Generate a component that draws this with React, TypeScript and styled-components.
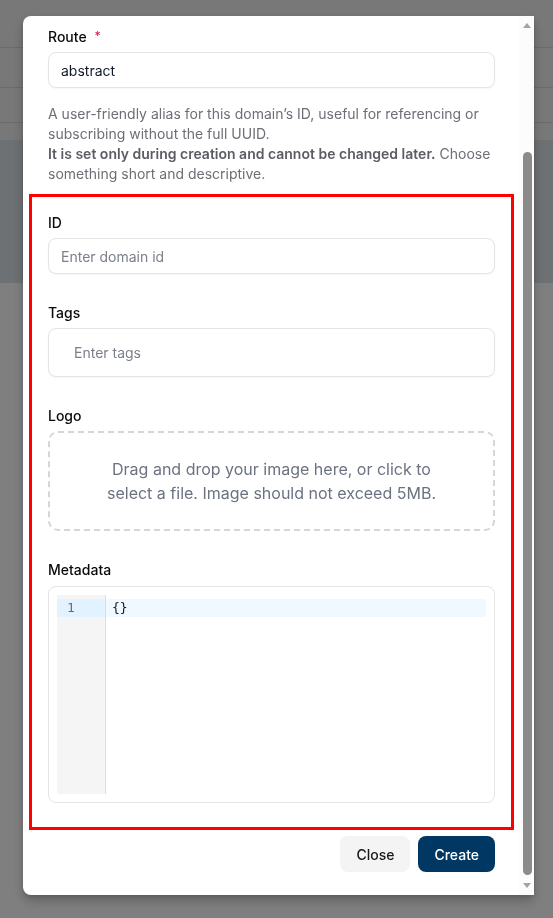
import React from "react";
import styled, { createGlobalStyle } from "styled-components";

const GlobalStyle = createGlobalStyle`
  html, body { margin: 0; padding: 0; height: 100%; }
  body { font-family: Inter, "Noto Sans", sans-serif; background: #ffffff; overflow: hidden; }
  * { box-sizing: border-box; }
`;

/* ---------- page behind the overlay ---------- */
const Page = styled.div`
  display: flex;
  flex-direction: column;
  height: 918px;
  background: #ffffff;
`;

const PageBar = styled.div<{ $h: number; $bg?: string; $line?: boolean }>`
  height: ${(p) => p.$h}px;
  flex: none;
  background: ${(p) => p.$bg || "#f0f0f0"};
  border-bottom: ${(p) => (p.$line ? "1px solid #d6d6d6" : "none")};
`;

/* ---------- overlay + dialog ---------- */
const Overlay = styled.div`
  position: fixed;
  inset: 0;
  background: rgba(0, 0, 0, 0.5);
  display: flex;
  padding: 16px 19px 23px 23px;
`;

const Dialog = styled.div`
  flex: 1;
  display: flex;
  background: #ffffff;
  border-radius: 8px 2px 2px 8px;
  box-shadow: 0 6px 12px rgba(0, 0, 0, 0.22), 0 2px 4px rgba(0, 0, 0, 0.12);
`;

const Body = styled.div`
  flex: 1;
  min-width: 0;
  overflow: hidden;
  padding: 11px 24px 23px 25px;
  display: flex;
  flex-direction: column;
`;

/* ---------- scrollbar drawing ---------- */
const ScrollBar = styled.div`
  width: 15px;
  flex: none;
  display: flex;
  flex-direction: column;
  align-items: center;
  background: #fcfcfc;
`;

const ArrowBox = styled.div<{ $down?: boolean }>`
  height: 15px;
  flex: none;
  display: flex;
  justify-content: center;
  align-items: ${(p) => (p.$down ? "flex-start" : "flex-end")};
  padding: ${(p) => (p.$down ? "3px 0 0" : "0 0 3px")};
`;

const Arrow = styled.span<{ $down?: boolean }>`
  width: 0;
  height: 0;
  border-left: 4px solid transparent;
  border-right: 4px solid transparent;
  ${(p) =>
    p.$down ? "border-top: 5px solid #a3a3a3;" : "border-bottom: 5px solid #a3a3a3;"}
`;

const Track = styled.div`
  flex: 1;
  width: 100%;
  display: flex;
  justify-content: center;
  padding: 121px 0 5px 1px;
`;

const Thumb = styled.div`
  width: 9px;
  border-radius: 5px;
  background: #8b8b8b;
`;

/* ---------- form ---------- */
const Field = styled.div`
  display: flex;
  flex-direction: column;
`;

const Label = styled.label<{ $gap?: number }>`
  display: block;
  font-size: 14px;
  line-height: 20px;
  font-weight: 500;
  color: #0a0a0a;
  margin-bottom: ${(p) => p.$gap ?? 5}px;
`;

const Required = styled.span`
  color: #e8224f;
  font-size: 12px;
  line-height: 12px;
  vertical-align: top;
  margin-left: 8px;
  position: relative;
  top: 3px;
`;

const TextInput = styled.input<{ $h?: number; $pl?: number }>`
  width: 100%;
  height: ${(p) => p.$h ?? 36}px;
  border: 1px solid #e4e4e7;
  border-radius: 8px;
  padding: 0 12px 0 ${(p) => p.$pl ?? 12}px;
  font-family: Inter, "Noto Sans", sans-serif;
  font-size: 14px;
  color: #111827;
  background: #ffffff;
  box-shadow: 0 1px 2px rgba(0, 0, 0, 0.04);
  outline: none;
  &::placeholder { color: #7b808a; }
`;

const Help = styled.p`
  margin: 16px 0 0;
  font-size: 14px;
  line-height: 20px;
  color: #6e6e76;
`;

const HelpStrong = styled.span`
  font-weight: 600;
  color: #5c5c64;
`;

const Highlight = styled.div`
  margin: 10px -19px 0 -19px;
  border: 3px solid #ff0000;
  padding: 16px 16px 24px 16px;
  display: flex;
  flex-direction: column;
  gap: 29px;
`;

const DropZone = styled.div`
  height: 100px;
  border: 2px dashed #d4d6dc;
  border-radius: 10px;
  display: flex;
  align-items: center;
  justify-content: center;
  cursor: pointer;
`;

const DropText = styled.p`
  margin: 0;
  max-width: 360px;
  text-align: center;
  font-size: 16px;
  line-height: 24px;
  color: #6b7280;
`;

const EditorBox = styled.div`
  height: 217px;
  border: 1px solid #e4e4e7;
  border-radius: 8px;
  padding: 8px;
  background: #ffffff;
`;

const Editor = styled.div`
  height: 100%;
  display: flex;
  font-family: "DejaVu Sans Mono", "Liberation Mono", monospace;
  font-size: 13px;
  line-height: 18px;
`;

const Gutter = styled.div`
  width: 49px;
  flex: none;
  background: #f5f5f5;
  border-right: 1px solid #dddddd;
  padding-top: 4px;
  color: #6c6c6c;
`;

const GutterLine = styled.div<{ $active?: boolean }>`
  height: 18px;
  padding-left: 10px;
  background: ${(p) => (p.$active ? "#e2f2ff" : "transparent")};
`;

const Code = styled.div`
  flex: 1;
  padding-top: 4px;
`;

const CodeLine = styled.div<{ $active?: boolean }>`
  height: 18px;
  padding: 0 2px 0 6px;
  color: #1a1a1a;
  background: ${(p) => (p.$active ? "#eff9ff" : "transparent")};
`;

const Footer = styled.div`
  display: flex;
  justify-content: flex-end;
  gap: 8px;
  margin-top: 6px;
`;

const Button = styled.button<{ $primary?: boolean }>`
  height: 36px;
  padding: 0 16px;
  border: none;
  border-radius: 8px;
  font-family: Inter, "Noto Sans", sans-serif;
  font-size: 14px;
  font-weight: 500;
  cursor: pointer;
  background: ${(p) => (p.$primary ? "#003763" : "#f4f4f5")};
  color: ${(p) => (p.$primary ? "#ffffff" : "#18181b")};
`;

export default function App() {
  return (
    <>
      <GlobalStyle />
      <Page>
        <PageBar $h={48} $line />
        <PageBar $h={40} $line />
        <PageBar $h={35} $line />
        <PageBar $h={17} />
        <PageBar $h={143} $bg="#dce2e8" />
      </Page>
      <Overlay>
        <Dialog>
          <Body>
            <Field>
              <Label>
                Route<Required>*</Required>
              </Label>
              <TextInput defaultValue="abstract" />
              <Help>
                A user-friendly alias for this domain’s ID, useful for referencing or subscribing without the full UUID.
                <br />
                <HelpStrong>It is set only during creation and cannot be changed later.</HelpStrong> Choose something
                short and descriptive.
              </Help>
            </Field>
            <Highlight>
              <Field>
                <Label>ID</Label>
                <TextInput placeholder="Enter domain id" />
              </Field>
              <Field>
                <Label>Tags</Label>
                <TextInput $h={49} $pl={25} placeholder="Enter tags" />
              </Field>
              <Field>
                <Label>Logo</Label>
                <DropZone>
                  <DropText>
                    Drag and drop your image here, or click to select a file. Image should not exceed 5MB.
                  </DropText>
                </DropZone>
              </Field>
              <Field>
                <Label $gap={6}>Metadata</Label>
                <EditorBox>
                  <Editor>
                    <Gutter>
                      <GutterLine $active>1</GutterLine>
                    </Gutter>
                    <Code>
                      <CodeLine $active>{"{}"}</CodeLine>
                    </Code>
                  </Editor>
                </EditorBox>
              </Field>
            </Highlight>
            <Footer>
              <Button>Close</Button>
              <Button $primary>Create</Button>
            </Footer>
          </Body>
          <ScrollBar>
            <ArrowBox>
              <Arrow />
            </ArrowBox>
            <Track>
              <Thumb />
            </Track>
            <ArrowBox $down>
              <Arrow $down />
            </ArrowBox>
          </ScrollBar>
        </Dialog>
      </Overlay>
    </>
  );
}
